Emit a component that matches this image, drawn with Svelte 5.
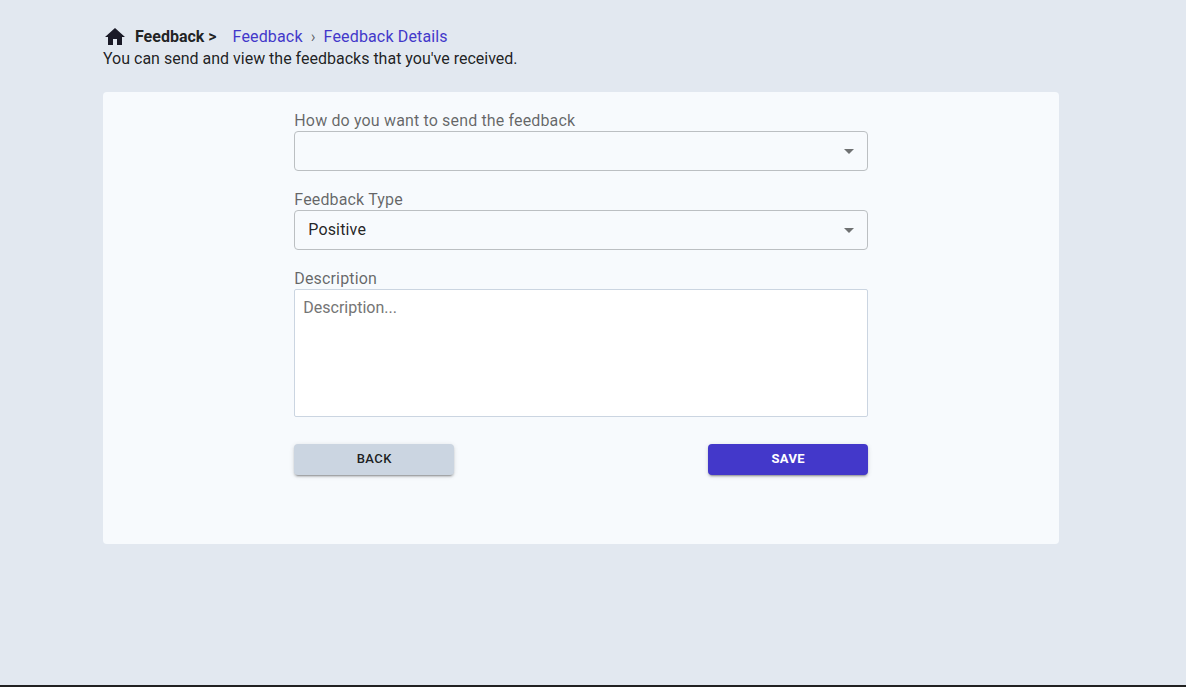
<script>
  let type = $state('Positive');
  let description = $state('');
  const crumbs = ['Feedback', 'Feedback Details'];
</script>

{#snippet select(value)}
  <div class="select" role="combobox" aria-expanded="false" aria-controls="options" tabindex="0">
    <span>{value}</span>
    <svg width="24" height="24" viewBox="0 0 24 24"><path d="M7 10l5 5 5-5z" /></svg>
  </div>
{/snippet}

<div class="page">
  <header>
    <div class="trail">
      <svg class="home" width="24" height="24" viewBox="0 0 24 24"><path d="M10 20v-6h4v6h5v-8h3L12 3 2 12h3v8z" /></svg>
      <strong>Feedback &gt;</strong>
      <nav>
        {#each crumbs as crumb, i}
          {#if i > 0}<span class="sep">›</span>{/if}
          <a href="#top">{crumb}</a>
        {/each}
      </nav>
    </div>
    <p>You can send and view the feedbacks that you've received.</p>
  </header>

  <main>
    <form>
      <div class="field">
        <div class="label">How do you want to send the feedback</div>
        {@render select('')}
      </div>
      <div class="field">
        <div class="label">Feedback Type</div>
        {@render select(type)}
      </div>
      <div class="field">
        <label class="label" for="description">Description</label>
        <textarea id="description" placeholder="Description..." bind:value={description}></textarea>
      </div>
      <div class="actions">
        <button type="button" class="back">Back</button>
        <button type="button" class="save">Save</button>
      </div>
    </form>
  </main>
</div>

<style>
  :global(body) {
    background: #e2e8f0;
  }
  .page, .page * {
    box-sizing: border-box;
  }
  .page {
    height: 687px;
    padding: 25px 127px 0 103px;
    border-bottom: 2px solid #212121;
    font: 400 16px/24px Roboto, sans-serif;
    color: rgba(0, 0, 0, 0.87);
  }
  header {
    height: 67px;
  }
  .trail {
    display: flex;
    height: 22px;
  }
  .home {
    fill: #1a1a27;
  }
  strong {
    margin-left: 8px;
    font-weight: 700;
    line-height: 23px;
    width: 97.6px;
  }
  nav {
    display: flex;
    line-height: 23px;
    letter-spacing: 0.15px;
  }
  a {
    color: #4338ca;
    text-decoration: none;
  }
  .sep {
    margin: 0 8px;
    color: rgba(0, 0, 0, 0.6);
  }
  p {
    margin: 0;
  }
  main {
    height: 452px;
    padding: 17px 191px 0;
    background: #f7fafd;
    border-radius: 4px;
  }
  .field {
    margin-bottom: 17px;
  }
  .label {
    display: block;
    height: 22px;
    padding-left: 0.3px;
    line-height: 23px;
    letter-spacing: 0.15px;
    color: rgba(0, 0, 0, 0.6);
  }
  .select {
    display: flex;
    align-items: center;
    justify-content: space-between;
    height: 40px;
    padding: 0 6px 0 13.3px;
    border: 1px solid #bbbfc2;
    border-radius: 4px;
    letter-spacing: 0.15px;
  }
  .select span {
    line-height: 22px;
    padding-bottom: 1px;
  }
  .select svg {
    fill: #6f7172;
  }
  textarea {
    display: block;
    width: 100%;
    height: 128px;
    padding: 6px 8.3px;
    border: 1px solid #cbd5e1;
    border-radius: 2px;
    background: #fff;
    font: inherit;
    resize: none;
  }
  textarea::placeholder {
    color: #757575;
  }
  .actions {
    display: flex;
    justify-content: space-between;
    margin-top: 27px;
  }
  button {
    width: 160px;
    height: 31px;
    padding: 0 0 2px 0.5px;
    border: 0;
    border-radius: 4px;
    font: 500 13px/22px Roboto, sans-serif;
    letter-spacing: 0.4px;
    text-transform: uppercase;
    box-shadow: 0 3px 1px -2px rgba(0, 0, 0, 0.2), 0 2px 2px 0 rgba(0, 0, 0, 0.14), 0 1px 5px 0 rgba(0, 0, 0, 0.12);
  }
  .back {
    background: #cbd5e1;
    color: rgba(0, 0, 0, 0.87);
  }
  .save {
    background: #4338ca;
    color: #fff;
    font-weight: 700;
  }
</style>
